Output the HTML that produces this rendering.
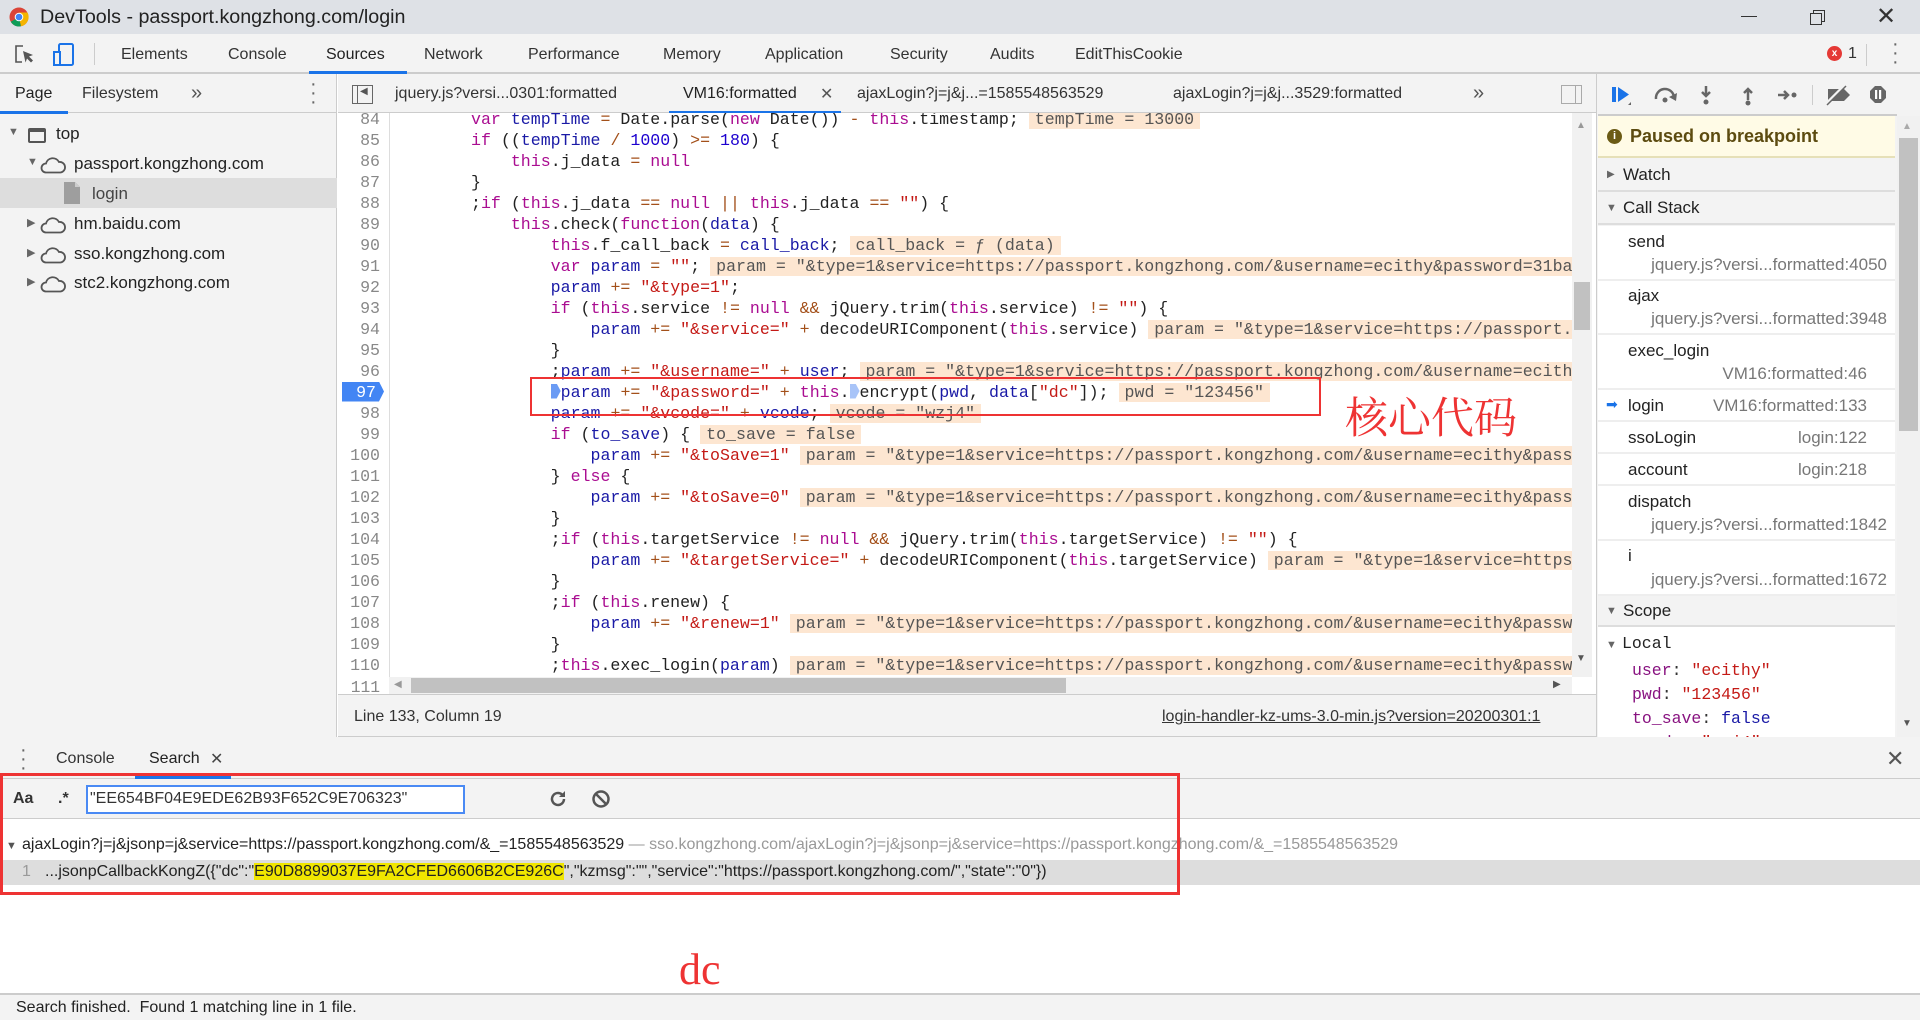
<!DOCTYPE html>
<html><head><meta charset="utf-8">
<style>
*{box-sizing:border-box;margin:0;padding:0}
body{width:1920px;height:1020px;overflow:hidden;position:relative;background:#fff;font-family:"Liberation Sans",sans-serif;color:#333;font-size:16px}
.a{position:absolute}
.t{position:absolute;white-space:nowrap}
.mono{font-family:"Liberation Mono",monospace}
.k{color:#aa0d91}.v{color:#1a1aa6}.s{color:#c41a16}.n{color:#1c00cf}.o{color:#a3501a}
.iv{background:#fde6d1;color:#555;padding:0 6px;margin-left:10px}
.ln{position:absolute;left:0;width:380px;text-align:right;color:#888}
.cl{position:absolute;left:471px;white-space:pre;color:#222}
.cs{position:absolute;left:1598px;width:297px;background:#fff;border-bottom:2px solid #eee}
.cs .f{position:absolute;left:30px;font-size:17px;color:#222}
.cs .l{position:absolute;right:8px;font-size:17px;color:#777}
</style></head><body>
<!-- title bar -->
<div class="a" style="left:0;top:0;width:1920px;height:34px;background:#dee1e6"></div>
<svg class="a" style="left:9px;top:7px" width="20" height="20" viewBox="0 0 20 20"><circle cx="10" cy="10" r="9.5" fill="#db4437"/><path d="M10 10 L1.8 14.8 A9.5 9.5 0 0 0 12 19.3Z" fill="#0f9d58"/><path d="M10 10 L12 19.3 A9.5 9.5 0 0 0 18.5 5.5 L10 5.5Z" fill="#f4b400"/><circle cx="10" cy="10" r="4.3" fill="#fff"/><circle cx="10" cy="10" r="3.3" fill="#4285f4"/></svg>
<div class="t" style="left:40px;top:6px;font-size:19.7px;color:#222">DevTools - passport.kongzhong.com/login</div>
<div class="a" style="left:1741px;top:16px;width:16px;height:1px;background:#333"></div>
<div class="a" style="left:1813px;top:10px;width:12px;height:12px;border:1px solid #333;background:#dee1e6"></div>
<div class="a" style="left:1810px;top:13px;width:12px;height:12px;border:1px solid #333;background:#dee1e6"></div>
<div class="t" style="left:1876px;top:2px;font-size:24px;color:#333;font-weight:300">✕</div>

<!-- main toolbar -->
<div class="a" style="left:0;top:34px;width:1920px;height:40px;background:#f3f3f3;border-bottom:2px solid #ccc"></div>
<svg class="a" style="left:14px;top:44px" width="22" height="22" viewBox="0 0 22 22"><path d="M9 2H2v16h6" fill="none" stroke="#555" stroke-width="1.6"/><path d="M9 7l10 4-4 1.5 4 4-2 2-4-4-1.5 4z" fill="#555"/></svg>
<svg class="a" style="left:52px;top:43px" width="24" height="24" viewBox="0 0 24 24"><rect x="7" y="1" width="14" height="21" rx="1.5" fill="none" stroke="#1a73e8" stroke-width="2"/><rect x="2" y="9" width="6" height="13" fill="#f3f3f3" stroke="#1a73e8" stroke-width="2"/></svg>
<div class="a" style="left:94px;top:43px;width:1px;height:22px;background:#ccc"></div>
<div class="t" style="left:121px;top:46px;color:#333">Elements</div>
<div class="t" style="left:228px;top:46px;color:#333">Console</div>
<div class="t" style="left:326px;top:46px;color:#222">Sources</div>
<div class="a" style="left:309px;top:71px;width:98px;height:3px;background:#1a73e8"></div>
<div class="t" style="left:424px;top:46px;color:#333">Network</div>
<div class="t" style="left:528px;top:46px;color:#333">Performance</div>
<div class="t" style="left:663px;top:46px;color:#333">Memory</div>
<div class="t" style="left:765px;top:46px;color:#333">Application</div>
<div class="t" style="left:890px;top:46px;color:#333">Security</div>
<div class="t" style="left:990px;top:46px;color:#333">Audits</div>
<div class="t" style="left:1075px;top:46px;color:#333">EditThisCookie</div>
<div class="a" style="left:1827px;top:46px;width:15px;height:15px;border-radius:50%;background:#e53935;color:#fff;font-size:10px;font-weight:bold;text-align:center;line-height:15px">x</div>
<div class="t" style="left:1848px;top:45px;color:#333">1</div>
<div class="a" style="left:1866px;top:44px;width:1px;height:22px;background:#ccc"></div>
<div class="t" style="left:1892px;top:40px;font-size:20px;color:#666;line-height:9px;width:4px">·<br>·<br>·</div>

<!-- left navigator -->
<div class="a" style="left:0;top:74px;width:337px;height:663px;background:#f3f3f3;border-right:1px solid #ccc"></div>
<div class="a" style="left:0;top:112px;width:337px;height:1px;background:#ccc"></div>
<div class="t" style="left:15px;top:85px;color:#222">Page</div>
<div class="a" style="left:0;top:111px;width:68px;height:3px;background:#1a73e8"></div>
<div class="t" style="left:82px;top:85px;color:#333">Filesystem</div>
<div class="t" style="left:191px;top:82px;color:#555;font-size:20px">»</div>
<div class="t" style="left:310px;top:80px;font-size:20px;color:#666;line-height:9px">·<br>·<br>·</div>
<div class="a" style="left:0;top:178px;width:337px;height:30px;background:#ddd"></div>
<div class="t" style="left:8px;top:126px;font-size:11px;color:#666">▼</div>
<div class="a" style="left:28px;top:128px;width:18px;height:15px;border:2px solid #555;border-top-width:4px;border-radius:2px"></div>
<div class="t" style="left:56px;top:124px;font-size:17px;color:#222">top</div>
<div class="t" style="left:27px;top:156px;font-size:11px;color:#666">▼</div>
<svg class="a" style="left:40px;top:156px" width="27" height="18" viewBox="0 0 27 18"><path d="M6 16.5a4.5 4.5 0 0 1 0-9 7 7 0 0 1 13-1.5 5.3 5.3 0 0 1 1.5 10.5z" fill="none" stroke="#555" stroke-width="1.8"/></svg>
<div class="t" style="left:74px;top:154px;font-size:17px;color:#222">passport.kongzhong.com</div>
<svg class="a" style="left:63px;top:181px" width="18" height="24" viewBox="0 0 18 24"><path d="M1 1h11l5 5v17H1z" fill="#9e9e9e"/><path d="M12 1v5h5" fill="#ccc"/></svg>
<div class="t" style="left:92px;top:184px;font-size:17px;color:#444">login</div>
<div class="t" style="left:27px;top:216px;font-size:11px;color:#666">▶</div>
<svg class="a" style="left:40px;top:216px" width="27" height="18" viewBox="0 0 27 18"><path d="M6 16.5a4.5 4.5 0 0 1 0-9 7 7 0 0 1 13-1.5 5.3 5.3 0 0 1 1.5 10.5z" fill="none" stroke="#555" stroke-width="1.8"/></svg>
<div class="t" style="left:74px;top:214px;font-size:17px;color:#222">hm.baidu.com</div>
<div class="t" style="left:27px;top:246px;font-size:11px;color:#666">▶</div>
<svg class="a" style="left:40px;top:246px" width="27" height="18" viewBox="0 0 27 18"><path d="M6 16.5a4.5 4.5 0 0 1 0-9 7 7 0 0 1 13-1.5 5.3 5.3 0 0 1 1.5 10.5z" fill="none" stroke="#555" stroke-width="1.8"/></svg>
<div class="t" style="left:74px;top:244px;font-size:17px;color:#222">sso.kongzhong.com</div>
<div class="t" style="left:27px;top:275px;font-size:11px;color:#666">▶</div>
<svg class="a" style="left:40px;top:275px" width="27" height="18" viewBox="0 0 27 18"><path d="M6 16.5a4.5 4.5 0 0 1 0-9 7 7 0 0 1 13-1.5 5.3 5.3 0 0 1 1.5 10.5z" fill="none" stroke="#555" stroke-width="1.8"/></svg>
<div class="t" style="left:74px;top:273px;font-size:17px;color:#222">stc2.kongzhong.com</div>

<!-- editor tabs -->
<div class="a" style="left:338px;top:74px;width:1258px;height:39px;background:#f3f3f3;border-bottom:1px solid #ccc"></div>
<div class="a" style="left:352px;top:85px;width:21px;height:19px;border:1px solid #666"></div>
<div class="a" style="left:357px;top:85px;width:1px;height:19px;background:#666"></div>
<div class="t" style="left:360px;top:86px;font-size:10px;color:#555">◀</div>
<div class="t" style="left:395px;top:85px;color:#333">jquery.js?versi...0301:formatted</div>
<div class="t" style="left:683px;top:85px;color:#222">VM16:formatted</div>
<div class="t" style="left:820px;top:84px;color:#555">✕</div>
<div class="a" style="left:669px;top:111px;width:172px;height:3px;background:#1a73e8"></div>
<div class="t" style="left:857px;top:85px;color:#333">ajaxLogin?j=j&amp;j...=1585548563529</div>
<div class="t" style="left:1173px;top:85px;color:#333">ajaxLogin?j=j&amp;j...3529:formatted</div>
<div class="t" style="left:1473px;top:82px;color:#555;font-size:20px">»</div>
<div class="a" style="left:1561px;top:85px;width:21px;height:19px;border:1px solid #aaa"></div>
<div class="a" style="left:1575px;top:85px;width:1px;height:19px;background:#aaa"></div>

<!-- code area -->
<div class="a" style="left:338px;top:113px;width:1254px;height:581px;overflow:hidden;background:#fff">
 <div class="a" style="left:51px;top:0;width:1px;height:581px;background:#ddd"></div>
</div>
<div class="a mono" style="left:338px;top:113px;width:1234px;height:564px;overflow:hidden;font-size:16.6px;line-height:21px">
 <div class="a" style="left:-338px;top:-4.5px;width:1572px;height:600px">
  <div class="ln" style="top:0">84</div><div class="cl" style="top:0"><span class="k">var</span> <span class="v">tempTime</span> <span class="o">=</span> Date.parse(<span class="k">new</span> Date()) <span class="o">-</span> <span class="k">this</span>.timestamp;<span class="iv">tempTime = 13000</span></div>
  <div class="ln" style="top:21px">85</div><div class="cl" style="top:21px"><span class="k">if</span> ((<span class="v">tempTime</span> <span class="o">/</span> <span class="n">1000</span>) <span class="o">&gt;=</span> <span class="n">180</span>) {</div>
  <div class="ln" style="top:42px">86</div><div class="cl" style="top:42px">    <span class="k">this</span>.j_data <span class="o">=</span> <span class="k">null</span></div>
  <div class="ln" style="top:63px">87</div><div class="cl" style="top:63px">}</div>
  <div class="ln" style="top:84px">88</div><div class="cl" style="top:84px">;<span class="k">if</span> (<span class="k">this</span>.j_data <span class="o">==</span> <span class="k">null</span> <span class="o">||</span> <span class="k">this</span>.j_data <span class="o">==</span> <span class="s">""</span>) {</div>
  <div class="ln" style="top:105px">89</div><div class="cl" style="top:105px">    <span class="k">this</span>.check(<span class="k">function</span>(<span class="v">data</span>) {</div>
  <div class="ln" style="top:126px">90</div><div class="cl" style="top:126px">        <span class="k">this</span>.f_call_back <span class="o">=</span> <span class="v">call_back</span>;<span class="iv">call_back = ƒ (data)</span></div>
  <div class="ln" style="top:147px">91</div><div class="cl" style="top:147px">        <span class="k">var</span> <span class="v">param</span> <span class="o">=</span> <span class="s">""</span>;<span class="iv">param = "&amp;type=1&amp;service=https://passport.kongzhong.com/&amp;username=ecithy&amp;password=31ba8f</span></div>
  <div class="ln" style="top:168px">92</div><div class="cl" style="top:168px">        <span class="v">param</span> <span class="o">+=</span> <span class="s">"&amp;type=1"</span>;</div>
  <div class="ln" style="top:189px">93</div><div class="cl" style="top:189px">        <span class="k">if</span> (<span class="k">this</span>.service <span class="o">!=</span> <span class="k">null</span> <span class="o">&amp;&amp;</span> jQuery.trim(<span class="k">this</span>.service) <span class="o">!=</span> <span class="s">""</span>) {</div>
  <div class="ln" style="top:210px">94</div><div class="cl" style="top:210px">            <span class="v">param</span> <span class="o">+=</span> <span class="s">"&amp;service="</span> <span class="o">+</span> decodeURIComponent(<span class="k">this</span>.service)<span class="iv">param = "&amp;type=1&amp;service=https://passport.kongzhong.com/</span></div>
  <div class="ln" style="top:231px">95</div><div class="cl" style="top:231px">        }</div>
  <div class="ln" style="top:252px">96</div><div class="cl" style="top:252px">        ;<span class="v">param</span> <span class="o">+=</span> <span class="s">"&amp;username="</span> <span class="o">+</span> <span class="v">user</span>;<span class="iv">param = "&amp;type=1&amp;service=https://passport.kongzhong.com/&amp;username=ecithy&amp;pass</span></div>
  <div class="a" style="left:342px;top:273px;width:42px;height:20px;background:#4285f4;clip-path:polygon(0 0,88% 0,100% 50%,88% 100%,0 100%)"></div>
  <div class="ln" style="top:273px;color:#fff;width:376px">97</div><div class="cl" style="top:273px">        <span style="display:inline-block;width:10px;height:15px;background:#6a9bf4;clip-path:polygon(0 0,60% 0,100% 50%,60% 100%,0 100%);vertical-align:-2px"></span><span class="v">param</span> <span class="o">+=</span> <span class="s">"&amp;password="</span> <span class="o">+</span> <span class="k">this</span>.<span style="display:inline-block;width:10px;height:15px;background:#a8c4f8;clip-path:polygon(0 0,60% 0,100% 50%,60% 100%,0 100%);vertical-align:-2px"></span>encrypt(<span class="v">pwd</span>, <span class="v">data</span>[<span class="s">"dc"</span>]);<span class="iv">pwd = "123456"</span></div>
  <div class="ln" style="top:294px">98</div><div class="cl" style="top:294px">        <span class="v">param</span> <span class="o">+=</span> <span class="s">"&amp;vcode="</span> <span class="o">+</span> <span class="v">vcode</span>;<span class="iv">vcode = "wzj4"</span></div>
  <div class="ln" style="top:315px">99</div><div class="cl" style="top:315px">        <span class="k">if</span> (<span class="v">to_save</span>) {<span class="iv">to_save = false</span></div>
  <div class="ln" style="top:336px">100</div><div class="cl" style="top:336px">            <span class="v">param</span> <span class="o">+=</span> <span class="s">"&amp;toSave=1"</span><span class="iv">param = "&amp;type=1&amp;service=https://passport.kongzhong.com/&amp;username=ecithy&amp;password=</span></div>
  <div class="ln" style="top:357px">101</div><div class="cl" style="top:357px">        } <span class="k">else</span> {</div>
  <div class="ln" style="top:378px">102</div><div class="cl" style="top:378px">            <span class="v">param</span> <span class="o">+=</span> <span class="s">"&amp;toSave=0"</span><span class="iv">param = "&amp;type=1&amp;service=https://passport.kongzhong.com/&amp;username=ecithy&amp;password=</span></div>
  <div class="ln" style="top:399px">103</div><div class="cl" style="top:399px">        }</div>
  <div class="ln" style="top:420px">104</div><div class="cl" style="top:420px">        ;<span class="k">if</span> (<span class="k">this</span>.targetService <span class="o">!=</span> <span class="k">null</span> <span class="o">&amp;&amp;</span> jQuery.trim(<span class="k">this</span>.targetService) <span class="o">!=</span> <span class="s">""</span>) {</div>
  <div class="ln" style="top:441px">105</div><div class="cl" style="top:441px">            <span class="v">param</span> <span class="o">+=</span> <span class="s">"&amp;targetService="</span> <span class="o">+</span> decodeURIComponent(<span class="k">this</span>.targetService)<span class="iv">param = "&amp;type=1&amp;service=https://passport</span></div>
  <div class="ln" style="top:462px">106</div><div class="cl" style="top:462px">        }</div>
  <div class="ln" style="top:483px">107</div><div class="cl" style="top:483px">        ;<span class="k">if</span> (<span class="k">this</span>.renew) {</div>
  <div class="ln" style="top:504px">108</div><div class="cl" style="top:504px">            <span class="v">param</span> <span class="o">+=</span> <span class="s">"&amp;renew=1"</span><span class="iv">param = "&amp;type=1&amp;service=https://passport.kongzhong.com/&amp;username=ecithy&amp;password=</span></div>
  <div class="ln" style="top:525px">109</div><div class="cl" style="top:525px">        }</div>
  <div class="ln" style="top:546px">110</div><div class="cl" style="top:546px">        ;<span class="k">this</span>.exec_login(<span class="v">param</span>)<span class="iv">param = "&amp;type=1&amp;service=https://passport.kongzhong.com/&amp;username=ecithy&amp;password=</span></div>
 </div>
</div>
<div class="t mono" style="left:338px;top:678px;width:42px;text-align:right;color:#888;font-size:16.3px">111</div>
<!-- h scrollbar -->
<div class="a" style="left:389px;top:677px;width:1183px;height:17px;background:#f1f1f1"></div>
<div class="a" style="left:411px;top:678px;width:655px;height:15px;background:#c1c1c1"></div>
<div class="t" style="left:394px;top:679px;font-size:10px;color:#999">◀</div>
<div class="t" style="left:1553px;top:679px;font-size:10px;color:#555">▶</div>
<!-- v scrollbar -->
<div class="a" style="left:1572px;top:113px;width:20px;height:564px;background:#f1f1f1"></div>
<div class="a" style="left:1574px;top:282px;width:16px;height:48px;background:#c1c1c1"></div>
<div class="t" style="left:1576px;top:120px;font-size:10px;color:#999">▲</div>
<div class="t" style="left:1576px;top:653px;font-size:10px;color:#555">▼</div>
<!-- status bar -->
<div class="a" style="left:338px;top:694px;width:1258px;height:43px;background:#f3f3f3;border-top:1px solid #ccc;border-bottom:1px solid #ccc"></div>
<div class="t" style="left:354px;top:708px;color:#333">Line 133, Column 19</div>
<div class="t" style="left:1162px;top:708px;color:#333;text-decoration:underline">login-handler-kz-ums-3.0-min.js?version=20200301:1</div>

<!-- red annotations code -->
<div class="a" style="left:530px;top:377px;width:791px;height:39px;border:2.5px solid #ee3333"></div>
<div class="t" style="left:1345px;top:385px;font-size:43px;color:#ee3333;font-family:'Noto Serif CJK SC',serif">核心代码</div>

<!-- right debugger pane -->
<div class="a" style="left:1596px;top:74px;width:324px;height:663px;background:#f3f3f3;border-left:1px solid #ccc"></div>
<div class="a" style="left:1598px;top:114px;width:299px;height:2px;background:#ccc"></div>
<svg class="a" style="left:1610px;top:84px" width="300" height="22" viewBox="0 0 300 22">
 <rect x="2" y="3" width="4" height="15" fill="#1a73e8"/><path d="M8 3l11 7.5L8 18z" fill="#1a73e8"/><path d="M18 21l3-3v3z" fill="#666"/>
 <path d="M46 15a9 9 0 0 1 18-2" fill="none" stroke="#666" stroke-width="2.5"/><path d="M67 9l-1 8-7-4z" fill="#666"/><circle cx="55" cy="16" r="2.5" fill="#666"/>
 <path d="M96 2v9M92 8l4 4 4-4" fill="none" stroke="#666" stroke-width="2.5"/><circle cx="96" cy="18" r="2.5" fill="#666"/>
 <path d="M138 16V6M134 9l4-4 4 4" fill="none" stroke="#666" stroke-width="2.5"/><circle cx="138" cy="19" r="2.5" fill="#666"/>
 <path d="M168 11h9M174 7l4 4-4 4" fill="none" stroke="#666" stroke-width="2.5"/><circle cx="184" cy="11" r="2.5" fill="#666"/>
 <rect x="202" y="1" width="1" height="20" fill="#ccc"/>
 <path d="M218 5h16l6 6-6 6h-16z" fill="#666"/><path d="M215 21L236 0" stroke="#f3f3f3" stroke-width="3"/><path d="M217 21L236 2" stroke="#666" stroke-width="1.5"/>
 <path d="M265 2h6l5 5v7l-5 5h-6l-5-5v-7z" fill="#666"/><rect x="265" y="6" width="2.2" height="9" fill="#fff"/><rect x="269" y="6" width="2.2" height="9" fill="#fff"/>
</svg>
<div class="a" style="left:1598px;top:116px;width:297px;height:42px;background:#fffbe6;border-bottom:2px solid #e6e0b8"></div>
<div class="a" style="left:1607px;top:129px;width:15px;height:15px;border-radius:50%;background:#6b5b15;color:#fff;font-size:11px;font-weight:bold;text-align:center;line-height:15px">i</div>
<div class="t" style="left:1630px;top:126px;font-size:18px;font-weight:bold;color:#5c4b10">Paused on breakpoint</div>
<div class="a" style="left:1598px;top:158px;width:297px;height:34px;background:#f3f3f3;border-bottom:2px solid #ddd"></div>
<div class="t" style="left:1607px;top:169px;font-size:10px;color:#666">▶</div>
<div class="t" style="left:1623px;top:165px;font-size:17px;color:#222">Watch</div>
<div class="a" style="left:1598px;top:192px;width:297px;height:33px;background:#f3f3f3;border-bottom:2px solid #ddd"></div>
<div class="t" style="left:1606px;top:202px;font-size:11px;color:#666">▼</div>
<div class="t" style="left:1623px;top:198px;font-size:17px;color:#222">Call Stack</div>
<div class="cs" style="top:226px;height:55px"><div class="t f" style="top:6px">send</div><div class="t l" style="top:29px">jquery.js?versi...formatted:4050</div></div>
<div class="cs" style="top:281px;height:54px"><div class="t f" style="top:5px">ajax</div><div class="t l" style="top:28px">jquery.js?versi...formatted:3948</div></div>
<div class="cs" style="top:335px;height:55px"><div class="t f" style="top:6px">exec_login</div><div class="t l" style="top:29px;right:28px">VM16:formatted:46</div></div>
<div class="cs" style="top:390px;height:32px"><div class="t" style="left:8px;top:6px;color:#1a73e8;font-size:14px">➡</div><div class="t f" style="top:6px">login</div><div class="t l" style="top:6px;right:28px">VM16:formatted:133</div></div>
<div class="cs" style="top:422px;height:32px"><div class="t f" style="top:6px">ssoLogin</div><div class="t l" style="top:6px;right:28px">login:122</div></div>
<div class="cs" style="top:454px;height:32px"><div class="t f" style="top:6px">account</div><div class="t l" style="top:6px;right:28px">login:218</div></div>
<div class="cs" style="top:486px;height:55px"><div class="t f" style="top:6px">dispatch</div><div class="t l" style="top:29px">jquery.js?versi...formatted:1842</div></div>
<div class="cs" style="top:541px;height:55px"><div class="t f" style="top:5px">i</div><div class="t l" style="top:29px">jquery.js?versi...formatted:1672</div></div>
<div class="a" style="left:1598px;top:596px;width:297px;height:31px;background:#f3f3f3;border-bottom:2px solid #ddd"></div>
<div class="t" style="left:1606px;top:605px;font-size:11px;color:#666">▼</div>
<div class="t" style="left:1623px;top:601px;font-size:17px;color:#222">Scope</div>
<div class="a" style="left:1598px;top:627px;width:297px;height:110px;background:#fff;overflow:hidden">
 <div class="t" style="left:8px;top:12px;font-size:11px;color:#666">▼</div>
 <div class="t mono" style="left:24px;top:7px;color:#222;font-size:16.5px">Local</div>
 <div class="t mono" style="left:34px;top:34px;font-size:16.5px"><span style="color:#881280">user</span>: <span class="s">"ecithy"</span></div>
 <div class="t mono" style="left:34px;top:58px;font-size:16.5px"><span style="color:#881280">pwd</span>: <span class="s">"123456"</span></div>
 <div class="t mono" style="left:34px;top:82px;font-size:16.5px"><span style="color:#881280">to_save</span>: <span style="color:#1a1aa6">false</span></div>
 <div class="t mono" style="left:34px;top:106px;font-size:16.5px"><span style="color:#881280">vcode</span>: <span class="s">"wzj4"</span></div>
</div>
<div class="a" style="left:1897px;top:116px;width:23px;height:621px;background:#f1f1f1"></div>
<div class="a" style="left:1899px;top:138px;width:19px;height:293px;background:#c1c1c1"></div>
<div class="t" style="left:1902px;top:121px;font-size:10px;color:#aaa">▲</div>
<div class="t" style="left:1902px;top:718px;font-size:10px;color:#555">▼</div>

<!-- drawer -->
<div class="a" style="left:0;top:737px;width:1920px;height:42px;background:#f3f3f3;border-bottom:1px solid #ccc"></div>
<div class="t" style="left:20px;top:746px;font-size:20px;color:#666;line-height:9px">·<br>·<br>·</div>
<div class="t" style="left:56px;top:750px;color:#333">Console</div>
<div class="t" style="left:149px;top:750px;color:#222">Search</div>
<div class="t" style="left:210px;top:749px;color:#444">✕</div>
<div class="a" style="left:135px;top:776px;width:96px;height:3px;background:#1a73e8"></div>
<div class="t" style="left:1886px;top:746px;font-size:22px;color:#555">✕</div>
<div class="a" style="left:0;top:779px;width:1920px;height:40px;background:#f3f3f3;border-bottom:1px solid #ccc"></div>
<div class="t" style="left:13px;top:790px;font-weight:bold;font-size:16px;color:#333">Aa</div>
<div class="t" style="left:58px;top:790px;font-weight:bold;font-size:16px;color:#333">.*</div>
<div class="a" style="left:86px;top:785px;width:379px;height:29px;background:#fff;border:2px solid #4a8af4"></div>
<div class="t" style="left:90px;top:790px;color:#333;font-size:16px">"EE654BF04E9EDE62B93F652C9E706323"</div>
<svg class="a" style="left:548px;top:789px" width="20" height="20" viewBox="0 0 20 20"><path d="M16 10a6 6 0 1 1-2-4.5" fill="none" stroke="#555" stroke-width="2.5"/><path d="M17 2v6h-6z" fill="#555"/></svg>
<svg class="a" style="left:591px;top:789px" width="20" height="20" viewBox="0 0 20 20"><circle cx="10" cy="10" r="7.5" fill="none" stroke="#555" stroke-width="2.5"/><path d="M5 5l10 10" stroke="#555" stroke-width="2.5"/></svg>
<div class="t" style="left:6px;top:840px;font-size:11px;color:#555">▼</div>
<div class="t" style="left:22px;top:836px;color:#222">ajaxLogin?j=j&amp;jsonp=j&amp;service=https://passport.kongzhong.com/&amp;_=1585548563529 <span style="color:#999">— sso.kongzhong.com/ajaxLogin?j=j&amp;jsonp=j&amp;service=https://passport.kongzhong.com/&amp;_=1585548563529</span></div>
<div class="a" style="left:0;top:860px;width:1920px;height:25px;background:#ddd"></div>
<div class="t" style="left:22px;top:863px;color:#999">1</div>
<div class="t" style="left:45px;top:863px;color:#222">...jsonpCallbackKongZ({"dc":"<span style="background:#f0e600">E90D8899037E9FA2CFED6606B2CE926C</span>","kzmsg":"","service":"https://passport.kongzhong.com/","state":"0"})</div>
<div class="a" style="left:0;top:773px;width:1180px;height:122px;border:3px solid #ee3333"></div>
<div class="t" style="left:679px;top:944px;font-size:44px;color:#ee3333;font-family:'Liberation Serif',serif">dc</div>
<div class="a" style="left:0;top:993px;width:1920px;height:27px;background:#f3f3f3;border-top:2px solid #ccc"></div>
<div class="t" style="left:16px;top:999px;color:#222">Search finished.&nbsp; Found 1 matching line in 1 file.</div>
</body></html>
